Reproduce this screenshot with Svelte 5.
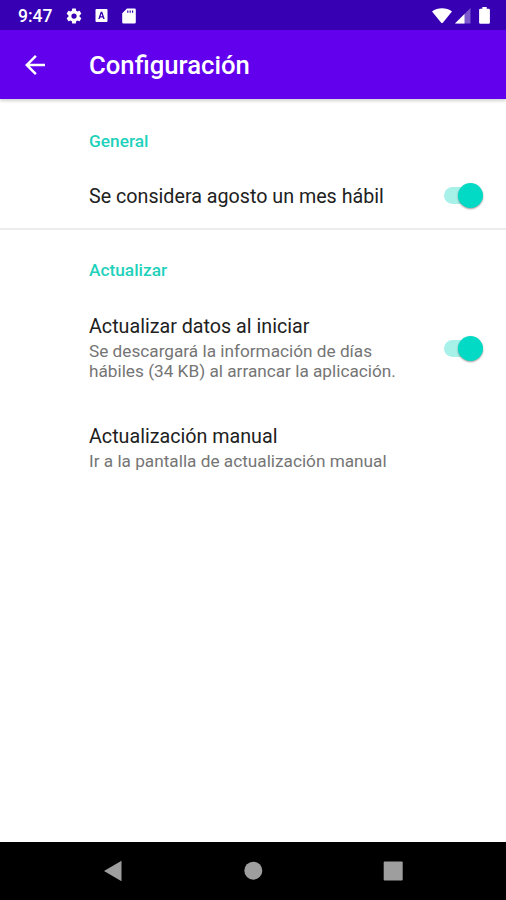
<script>
	let groups = $state([
		{
			title: 'General',
			items: [{ title: 'Se considera agosto un mes hábil', checked: true }]
		},
		{
			title: 'Actualizar',
			items: [
				{
					title: 'Actualizar datos al iniciar',
					summary: 'Se descargará la información de días hábiles (34 KB) al arrancar la aplicación.',
					checked: true
				},
				{
					title: 'Actualización manual',
					summary: 'Ir a la pantalla de actualización manual'
				}
			]
		}
	]);
</script>

<div class="screen">
	<div class="status-bar">
		<span class="clock">9:47</span>
		<svg class="gear" width="18" height="18" viewBox="0 0 24 24">
			<path
				d="M19.43 12.98c.04-.32.07-.64.07-.98s-.03-.66-.07-.98l2.11-1.65a.5.5 0 0 0 .12-.64l-2-3.46a.5.5 0 0 0-.61-.22l-2.49 1a7.3 7.3 0 0 0-1.69-.98l-.38-2.65A.49.49 0 0 0 14 2h-4a.49.49 0 0 0-.49.42l-.38 2.65c-.61.25-1.17.59-1.69.98l-2.49-1a.49.49 0 0 0-.61.22l-2 3.46a.49.49 0 0 0 .12.64l2.11 1.65c-.04.32-.07.65-.07.98s.03.66.07.98l-2.11 1.65a.5.5 0 0 0-.12.64l2 3.46c.12.22.39.3.61.22l2.49-1c.52.4 1.08.73 1.69.98l.38 2.65c.03.24.24.42.49.42h4c.25 0 .46-.18.49-.42l.38-2.65c.61-.25 1.17-.59 1.69-.98l2.49 1c.23.09.49 0 .61-.22l2-3.46a.5.5 0 0 0-.12-.64zM12 15.5a3.5 3.5 0 1 1 0-7 3.5 3.5 0 0 1 0 7z"
			/>
		</svg>
		<svg class="keyboard" width="13" height="13" viewBox="0 0 12 13">
			<path
				fill-rule="evenodd"
				d="M1 0h10a1 1 0 0 1 1 1v11a1 1 0 0 1-1 1H1a1 1 0 0 1-1-1V1a1 1 0 0 1 1-1zM5.2 2.8 2.8 10h1.4l.5-1.6h2.6l.5 1.6h1.4L6.8 2.8zM6 4.4l.9 2.9H5.1z"
			/>
		</svg>
		<svg class="sd" width="14" height="16" viewBox="0 0 14 16">
			<path
				fill-rule="evenodd"
				d="M5 .5h7.5a1.3 1.3 0 0 1 1.3 1.3v12.4a1.3 1.3 0 0 1-1.3 1.3h-11A1.3 1.3 0 0 1 .2 14.2V5.3zM5.2 2.6v2.2h1.2V2.6zM7.600 2.6v2.2h1.2V2.6zM10 2.6v2.2h1.2V2.6z"
			/>
		</svg>
		<div class="system-icons">
			<svg width="20" height="16" viewBox="0 0 20 16">
				<path d="M0 3.4C5.5-.7 14.5-.7 20 3.4l-9.200 11.400q-.8.8-1.600 0z" />
			</svg>
			<svg width="16" height="16" viewBox="0 0 16 16">
				<path d="M15.5 0v15.5H0z" opacity="0.35" />
				<path d="M9.5 6v9.500H0z" />
			</svg>
			<svg class="battery" width="11" height="17" viewBox="0 0 11 17">
				<path
					d="M3.3 0h4.400v1.700h2a1.200 1.200 0 0 1 1.200 1.200v12.700a1.200 1.200 0 0 1-1.200 1.200H1.300A1.200 1.200 0 0 1 .1 15.600V2.900a1.200 1.200 0 0 1 1.200-1.200h2z"
				/>
			</svg>
		</div>
	</div>

	<header class="app-bar">
		<button class="back" aria-label="Atrás">
			<svg width="30" height="30" viewBox="0 0 24 24">
				<path d="M20 11H7.830l5.590-5.590L12 4l-8 8 8 8 1.410-1.410L7.830 13H20z" />
			</svg>
		</button>
		<h1>Configuración</h1>
	</header>

	<main>
		{#each groups as group}
			<section>
				<h2>{group.title}</h2>
				{#each group.items as item}
					<div class="item" class:single={!item.summary}>
						<div class="text">
							<div class="title">{item.title}</div>
							{#if item.summary}
								<div class="summary">{item.summary}</div>
							{/if}
						</div>
						{#if item.checked !== undefined}
							<button
								class="switch"
								class:on={item.checked}
								role="switch"
								aria-checked={item.checked}
								aria-label={item.title}
								onclick={() => (item.checked = !item.checked)}
							>
								<span class="thumb"></span>
							</button>
						{/if}
					</div>
				{/each}
			</section>
		{/each}
	</main>

	<nav>
		<svg width="20" height="22" viewBox="0 0 20 22">
			<path d="M18.500 .8 1 11l17.500 10.200z" />
		</svg>
		<svg width="20" height="22" viewBox="0 0 20 22">
			<circle cx="10.3" cy="10.7" r="9" />
		</svg>
		<svg width="20" height="22" viewBox="0 0 20 22">
			<rect x="0.7" y="1.5" width="19" height="19" rx="1" />
		</svg>
	</nav>
</div>

<style>
	:global(body) {
		margin: 0;
	}

	.screen {
		width: 506px;
		height: 900px;
		display: flex;
		flex-direction: column;
		overflow: hidden;
		background: #fff;
		font-family: Roboto, sans-serif;
	}

	button {
		border: 0;
		padding: 0;
		background: none;
		cursor: pointer;
	}

	svg {
		display: block;
		fill: #fff;
	}

	/* Status bar */
	.status-bar {
		height: 30px;
		flex: none;
		box-sizing: border-box;
		padding: 1px 16px 0 18px;
		display: flex;
		align-items: center;
		background: #3700b3;
		color: #fff;
	}

	.clock {
		width: 47px;
		font-size: 17.5px;
		font-weight: 500;
	}

	.keyboard {
		margin-left: 12px;
	}

	.sd {
		margin-left: 14px;
	}

	.system-icons {
		margin-left: auto;
		display: flex;
		align-items: center;
		gap: 3px;
	}

	.battery {
		margin-left: 5px;
	}

	/* App bar */
	.app-bar {
		height: 69px;
		flex: none;
		display: flex;
		align-items: center;
		background: #6200ee;
		box-shadow: 0 2px 3px rgba(0, 0, 0, 0.18);
	}

	.back {
		width: 89px;
		padding-left: 20px;
		box-sizing: border-box;
	}

	h1 {
		margin: 0;
		color: #fff;
		font-size: 25.7px;
		font-weight: 500;
	}

	/* Preferences */
	main {
		flex: 1;
	}

	section + section {
		border-top: 2px solid #ececec;
	}

	h2 {
		height: 44px;
		margin: 0;
		padding: 20px 0 0 89px;
		color: #1fd1bb;
		font-size: 17.3px;
		font-weight: 500;
		line-height: 44px;
	}

	section + section h2 {
		height: 45px;
		padding-top: 18px;
	}

	.item {
		display: flex;
		align-items: center;
		padding: 22px 23px 22px 89px;
	}

	.item.single {
		padding: 20px 23px 21px 89px;
	}

	.text {
		width: 325px;
		margin-right: auto;
	}

	.title {
		color: #212121;
		font-size: 19.7px;
		line-height: 24px;
		white-space: nowrap;
	}

	.single .title {
		padding-top: 2px;
		margin-bottom: -2px;
	}

	.summary {
		margin-top: 2px;
		color: #757575;
		font-size: 17.22px;
		line-height: 20px;
	}

	.switch {
		width: 39px;
		height: 17px;
		display: flex;
		align-items: center;
		border-radius: 9px;
		background: #b9b9b9;
	}

	.switch.on {
		justify-content: flex-end;
		background: #a8f1e9;
	}

	.thumb {
		width: 25px;
		height: 25px;
		border-radius: 50%;
		background: #fafafa;
		box-shadow: 0 1px 2px rgba(0, 0, 0, 0.4);
	}

	.on .thumb {
		background: #03dac5;
	}

	/* Navigation bar */
	nav {
		height: 58px;
		flex: none;
		display: flex;
		align-items: center;
		justify-content: center;
		gap: 120px;
		background: #000;
	}

	nav svg {
		fill: #9e9e9e;
	}
</style>
